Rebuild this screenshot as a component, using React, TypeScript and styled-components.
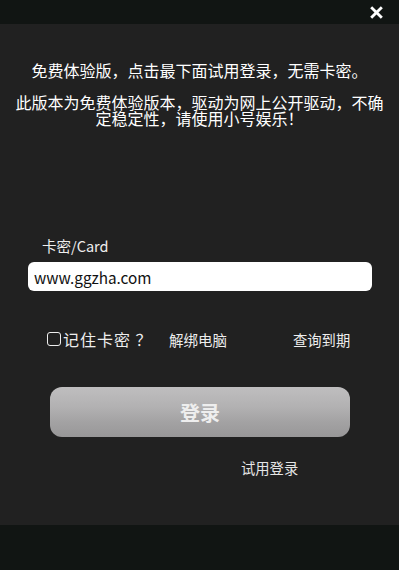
import styled, { createGlobalStyle } from 'styled-components';

const GlobalStyle = createGlobalStyle`
  html, body {
    margin: 0;
    padding: 0;
    background: #111513;
  }
  body {
    font-family: "Noto Sans CJK SC", "Noto Sans", sans-serif;
  }
`;

const Page = styled.div`
  width: 399px;
  height: 570px;
  display: flex;
  flex-direction: column;
  background: #111513;
`;

const TopBar = styled.div`
  height: 24px;
  display: flex;
  justify-content: flex-end;
  align-items: center;
  padding-right: 16px;
`;

const CloseIcon = styled.svg`
  width: 13px;
  height: 13px;
`;

const Main = styled.div`
  height: 501px;
  background: #212121;
  display: flex;
  flex-direction: column;
  color: #fff;
`;

const Notice = styled.p<{ $top: number }>`
  margin: ${p => p.$top}px 12px 0;
  font-size: 16px;
  line-height: 16px;
  text-align: center;
  color: #fff;
`;

const Label = styled.div`
  margin: 112px 0 0 42px;
  font-size: 14.5px;
  line-height: 16px;
  color: #eee;
`;

const Input = styled.div`
  margin: 8px 27px 0 28px;
  height: 29px;
  background: #fff;
  border-radius: 6px;
  display: flex;
  align-items: center;
  padding-left: 6px;
  font-size: 15.3px;
  color: #111;
`;

const OptionRow = styled.div`
  margin-top: 38px;
  height: 20px;
  position: relative;
`;

const Option = styled.span<{ $left: number; $size: number; $spacing?: number }>`
  position: absolute;
  top: 0;
  left: ${p => p.$left}px;
  height: 20px;
  display: flex;
  align-items: center;
  font-size: ${p => p.$size}px;
  letter-spacing: ${p => p.$spacing ?? 0}px;
  color: #eee;
  white-space: nowrap;
`;

const CheckBox = styled.span`
  width: 12px;
  height: 12px;
  border: 1.5px solid #eee;
  border-radius: 3px;
  margin-right: 2px;
`;

const LoginButton = styled.button`
  margin: 38px 0 0 50px;
  width: 300px;
  height: 50px;
  border: none;
  border-radius: 12px;
  background: linear-gradient(#bfbebf 0%, #b2b1b2 40%, #a3a2a3 70%, #989798 100%);
  color: #eeeeee;
  font-family: "Noto Sans CJK SC", sans-serif;
  font-size: 20px;
  font-weight: bold;
  cursor: pointer;
`;

const TrialLink = styled.div`
  margin: 20px 0 0 241px;
  font-size: 14.3px;
  color: #e6e6e6;
`;

export default function App() {
  return (
    <>
      <GlobalStyle />
      <Page>
        <TopBar>
          <CloseIcon viewBox="0 0 12 12">
            <path d="M2 2L10 10M10 2L2 10" stroke="#fff" strokeWidth="2.6" strokeLinecap="square" />
          </CloseIcon>
        </TopBar>
        <Main>
          <Notice $top={38}>免费体验版，点击最下面试用登录，无需卡密。</Notice>
          <Notice $top={16}>此版本为免费体验版本，驱动为网上公开驱动，不确定稳定性，请使用小号娱乐！</Notice>
          <Label>卡密/Card</Label>
          <Input>www.ggzha.com</Input>
          <OptionRow>
            <Option $left={47} $size={16} $spacing={1}>
              <CheckBox />记住卡密 ？
            </Option>
            <Option $left={169} $size={14.5}>解绑电脑</Option>
            <Option $left={293} $size={14.3}>查询到期</Option>
          </OptionRow>
          <LoginButton>登录</LoginButton>
          <TrialLink>试用登录</TrialLink>
        </Main>
      </Page>
    </>
  );
}
